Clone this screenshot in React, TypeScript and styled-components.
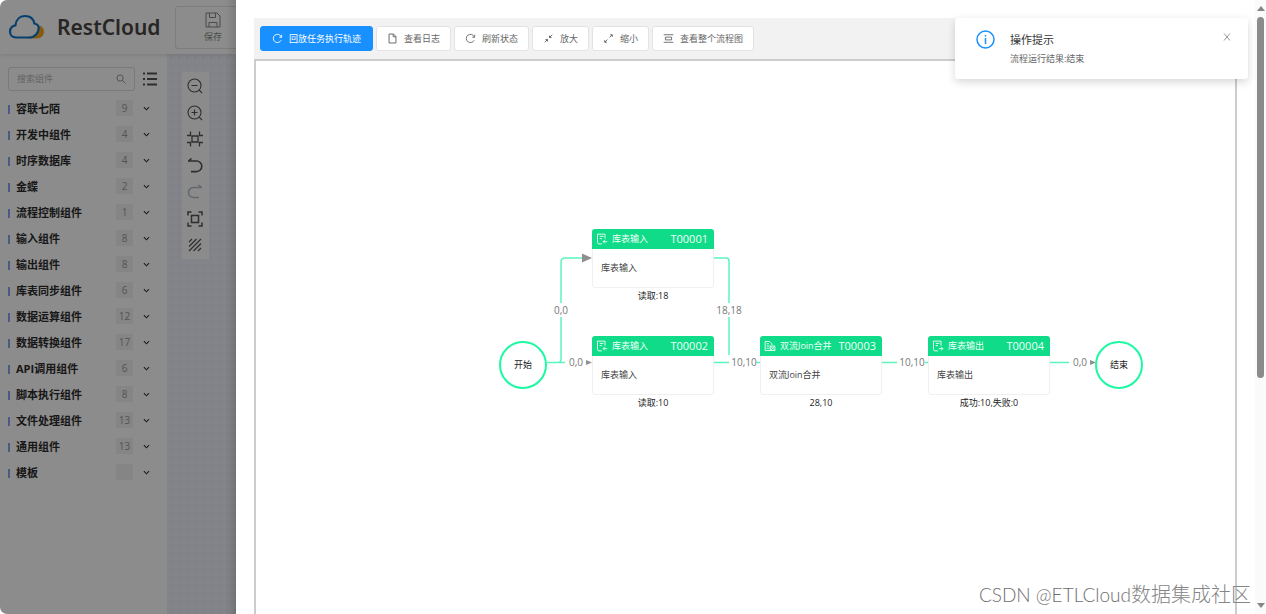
import React from 'react';
import styled, { createGlobalStyle, css } from 'styled-components';

const GlobalStyle = createGlobalStyle`
  *, *::before, *::after { box-sizing: border-box; }
  body {
    margin: 0;
    background: #fff;
    color: #444;
    font-family: 'Open Sans', 'Noto Sans CJK SC', sans-serif;
    font-size: 9px;
    line-height: 16px;
  }
  button, input { font-family: inherit; font-size: inherit; line-height: inherit; color: inherit; }
  ul { list-style: none; margin: 0; padding: 0; }
  p, h1, h2, h3 { margin: 0; }
`;

const Shell = styled.div`
  display: grid;
  grid-template-columns: 236px minmax(0, 1fr) 11px;
  height: 100vh;
  overflow: hidden;
`;

/* ---------- dimmed editor behind the drawer ---------- */

const Editor = styled.div`
  position: relative;
  display: flex;
  flex-direction: column;
  min-height: 0;
  overflow: hidden;
  border-radius: 7px 0 0 7px;
  background: #fff;
`;

const Mask = styled.div`
  position: absolute;
  inset: 0;
  background: linear-gradient(90deg, transparent 226px, rgba(0, 0, 0, 0.12)), rgba(0, 0, 0, 0.45);
`;

const Header = styled.header`
  display: flex;
  align-items: center;
  flex: none;
  height: 54px;
  padding-left: 8px;
  box-shadow: 0 1px 4px rgba(0, 0, 0, 0.12);
  z-index: 0;
  > * { flex: none; }
`;

const Brand = styled.h1`
  width: 106px;
  margin-left: 12px;
  font-family: 'Noto Sans', sans-serif;
  font-size: 21px;
  line-height: 28px;
  font-weight: 600;
  color: #4a4444;
`;

const SaveButton = styled.button`
  display: flex;
  flex-direction: column;
  align-items: center;
  gap: 1px;
  width: 76px;
  height: 43px;
  margin-left: 12px;
  padding: 5px 0 0;
  border: 1px solid #e4e4e4;
  border-radius: 3px;
  background: #fff;
  color: #888;
`;

const EditorBody = styled.div`
  display: flex;
  flex: 1;
  min-height: 0;
`;

const Sidebar = styled.nav`
  flex: none;
  width: 167px;
  padding: 13px 10px 0 8px;
`;

const SearchRow = styled.div`
  display: flex;
  align-items: center;
  gap: 7px;
  margin-bottom: 4px;
`;

const SearchBox = styled.label`
  display: flex;
  align-items: center;
  flex: none;
  width: 127px;
  height: 24px;
  padding: 0 8px;
  border: 1px solid #dcdcdc;
  border-radius: 3px;
  color: #888;
`;

const SearchInput = styled.input`
  flex: 1;
  min-width: 0;
  padding: 0;
  border: 0;
  outline: 0;
  background: transparent;
  &::placeholder { color: #b5b5b5; opacity: 1; }
`;

const IconButton = styled.button<{ $faded?: boolean }>`
  display: flex;
  align-items: center;
  justify-content: center;
  padding: 0;
  border: 0;
  background: transparent;
  color: ${(p) => (p.$faded ? '#b4bac6' : '#555')};
`;

const GroupButton = styled.button`
  display: flex;
  align-items: center;
  width: 100%;
  height: 26px;
  padding: 0;
  border: 0;
  background: transparent;
  text-align: left;
`;

const GroupName = styled.span`
  flex: 1;
  display: flex;
  align-items: center;
  gap: 6px;
  padding-top: 2px;
  font-size: 11px;
  font-weight: 700;
  color: #2c2c2c;
  &::before {
    content: '';
    width: 2px;
    height: 9px;
    background: #85a5f0;
  }
`;

const Count = styled.span`
  width: 17px;
  height: 16px;
  margin-right: 10px;
  background: #f2f2f2;
  color: #999;
  font-size: 10px;
  text-align: center;
`;

const Chevron = styled.span`
  display: flex;
  margin-right: 7px;
  color: #333;
`;

const Board = styled.div`
  flex: 1;
  padding: 18px 0 0 15px;
  background-color: #eff1f9;
  background-image: radial-gradient(circle, #e3e5ee 1px, transparent 1px);
  background-size: 8px 8px;
`;

const ToolStrip = styled.div`
  display: flex;
  flex-direction: column;
  justify-content: space-between;
  width: 27px;
  height: 187px;
  padding: 4px 1px 4px 0;
  background: #fdfdfd;
  ${IconButton} { height: 20px; }
`;

/* ---------- drawer ---------- */

const Drawer = styled.main`
  position: relative;
  display: flex;
  flex-direction: column;
  min-height: 0;
  padding: 18px 18px 0;
  background: #fff;
`;

const Toolbar = styled.div`
  display: flex;
  align-items: center;
  flex: none;
  gap: 3px;
  height: 41px;
  padding: 0 6px;
  background: #f2f2f2;
`;

const ToolButton = styled.button<{ $primary?: boolean }>`
  display: flex;
  align-items: center;
  gap: 6px;
  height: 25px;
  padding: 0 10px;
  border: 1px solid #e3e3e3;
  border-radius: 3px;
  background: #fff;
  color: #666;
  white-space: nowrap;
  ${(p) =>
    p.$primary &&
    css`
      padding: 0 11px;
      border-color: #1890ff;
      background: #1890ff;
      color: #fff;
    `}
`;

const Canvas = styled.section`
  position: relative;
  flex: 1;
  min-height: 0;
  overflow: hidden;
  border: 2px solid #ccc;
  border-bottom: 0;
`;

const Links = styled.svg`
  position: absolute;
  left: 0;
  top: 0;
`;

const NodeBox = styled.article<{ $x: number; $y: number }>`
  position: absolute;
  left: ${(p) => p.$x}px;
  top: ${(p) => p.$y}px;
  width: 122px;
`;

const NodeCard = styled.div`
  height: 59px;
  overflow: hidden;
  border-radius: 3px;
`;

const NodeHead = styled.header`
  display: flex;
  align-items: center;
  gap: 4px;
  height: 20px;
  padding: 0 6px 0 4px;
  background: #0fdb89;
  color: #f2fff9;
  white-space: nowrap;
`;

const NodeId = styled.span`
  margin-left: auto;
  font-size: 11px;
`;

const NodeBody = styled.p`
  height: 39px;
  padding: 11px 8px;
  border: 1px solid #f0f0f0;
  border-top: 0;
  border-radius: 0 0 3px 3px;
  background: #fff;
`;

const NodeStat = styled.p`
  text-align: center;
  color: #222;
`;

const Terminal = styled.div<{ $x: number; $y: number }>`
  position: absolute;
  left: ${(p) => p.$x}px;
  top: ${(p) => p.$y}px;
  display: flex;
  align-items: center;
  justify-content: center;
  width: 48px;
  height: 48px;
  border: 2px solid #1bf9a3;
  border-radius: 50%;
  background: #fff;
  color: #222;
`;

const LinkLabel = styled.span<{ $x: number; $y: number }>`
  position: absolute;
  left: ${(p) => p.$x}px;
  top: ${(p) => p.$y}px;
  transform: translate(-50%, -50%);
  font-size: 10px;
  line-height: 14px;
  color: #777;
  background: #fff;
`;

/* ---------- overlays ---------- */

const Toast = styled.div`
  position: absolute;
  top: 18px;
  right: 7px;
  display: flex;
  width: 293px;
  height: 61px;
  padding: 12px 16px 0 21px;
  border-radius: 3px;
  background: #fff;
  box-shadow: 0 3px 9px rgba(0, 0, 0, 0.16);
`;

const ToastText = styled.div`
  flex: 1;
  padding: 2px 0 0 15px;
  color: #666;
`;

const ToastTitle = styled.h2`
  margin-bottom: 3px;
  font-size: 11px;
  line-height: 16px;
  font-weight: 400;
  color: #333;
`;

const CloseButton = styled(IconButton)`
  align-self: flex-start;
  width: 10px;
  height: 14px;
  color: #999;
`;

const Watermark = styled.p`
  position: absolute;
  right: 4px;
  bottom: 4px;
  font-family: Lato, 'Noto Sans CJK SC', sans-serif;
  font-size: 20px;
  line-height: 30px;
  font-weight: 300;
  color: #858585;
  white-space: nowrap;
`;

const WatermarkHandle = styled.span`
  font-size: 19px;
  color: #6e6e6e;
`;

const ScrollTrack = styled.div`
  display: flex;
  flex-direction: column;
  align-items: center;
  padding: 6px 0;
  background: #fafafa;
  color: #858585;
`;

const ScrollThumb = styled.div`
  flex: 0 0 60%;
  width: 7px;
  margin: 6px 0 auto;
  border-radius: 4px;
  background: #8b8b8b;
`;

/* ---------- icons ---------- */

const Icon = ({ size = 16, w = 1, children }: { size?: number; w?: number; children: React.ReactNode }) => (
  <svg width={size} height={size} viewBox="0 0 16 16" fill="none" stroke="currentColor" strokeWidth={w} aria-hidden="true">
    {children}
  </svg>
);

const Logo = () => (
  <svg width="37" height="26" viewBox="0 0 37 26" fill="none" aria-hidden="true">
    <path d="M19 24.500h10c4 0 7-3 7-6.500 0-3.500-2-6-5-6.500-1 6.500-5 11-12 13z" fill="#f5a81c" />
    <path
      d="M8 23.500c-3.800 0-6-2.700-6-6s2.400-6 5.400-6.200C8 6 11.500 2 17 2c5 0 8.500 3 9.400 7.500 2.600.5 4.300 2.300 4.300 4.800 0 4-3.700 9.200-9.700 9.200z"
      fill="#fff"
      stroke="#0d76c8"
      strokeWidth="2.200"
    />
  </svg>
);

const ReloadIcon = () => (
  <Icon size={11} w={1.3}>
    <path d="M13.300 10.500A6 6 0 1 1 13.500 5.800M14 2.500v3.800h-3.300" />
  </Icon>
);
const FileIcon = () => (
  <Icon size={11} w={1.4}>
    <path d="M3 1.500h6.500L13 5v9.500H3zM9 1.500v4h4" />
  </Icon>
);
const ShrinkIcon = () => (
  <Icon size={11} w={1.3}>
    <path d="M2.500 13.500l4-4M13.500 2.500l-4 4" />
    <path d="M4 9.500h2.500V12zM12 6.500H9.500V4z" fill="currentColor" />
  </Icon>
);
const ExpandIcon = () => (
  <Icon size={11} w={1.3}>
    <path d="M3 13l3.500-3.500M13 3L9.500 6.500" />
    <path d="M2.500 11v2.500H5zM13.500 5V2.500H11z" fill="currentColor" />
  </Icon>
);
const FlowIcon = () => (
  <Icon size={11} w={1.3}>
    <path d="M1 2.500h14M1 13.500h14M3.500 6h9v4h-9z" />
  </Icon>
);

const ZoomIcon = ({ plus }: { plus?: boolean }) => (
  <Icon w={1.1}>
    <circle cx="7.500" cy="7.500" r="6.500" />
    <path d="M4.500 7.500h6M12.200 12.200l2.800 2.800" />
    {plus && <path d="M7.500 4.500v6" />}
  </Icon>
);

const stripTools = [
  { label: '缩小画布', icon: <ZoomIcon /> },
  { label: '放大画布', icon: <ZoomIcon plus /> },
  {
    label: '适应内容',
    icon: (
      <Icon w={1.3}>
        <path d="M5 5h6v6H5zM0 4.500h3.500V.5M12.500.5v4H16M0 11.500h3.500v4M12.500 15.500v-4H16" />
      </Icon>
    ),
  },
  {
    label: '撤销',
    icon: (
      <Icon w={1.6}>
        <path d="M1 3h8.500a5.300 5.300 0 0 1 0 10.600H4M4.500 .5L1.500 3" />
      </Icon>
    ),
  },
  {
    label: '重做',
    faded: true,
    icon: (
      <Icon w={1.5}>
        <path d="M15 3.500H6.500a5 5 0 0 0 0 10H12M11.500 1l3 2.500" />
      </Icon>
    ),
  },
  {
    label: '全屏',
    icon: (
      <Icon w={1.5}>
        <path d="M4.500 4.500h7v7h-7zM1 4.500V1h3.500M11.500 1H15v3.500M15 11.500V15h-3.500M4.500 15H1v-3.500" />
      </Icon>
    ),
  },
  {
    label: '网格',
    icon: (
      <Icon w={1.2}>
        <path d="M2 5l3-3M2 9.500L9.500 2M2 14L14 2M6.500 14L14 6.500M11 14l3-3" />
      </Icon>
    ),
  },
];

const NodeIcon = ({ kind }: { kind: string }) => (
  <Icon size={12} w={1.2}>
    {kind === 'join' ? (
      <>
        <path d="M1.500 14V2h6l3 3v2M3.500 5h3M3.500 8h4M3.500 11h4M1.500 14H8" />
        <path d="M8.500 8h6v6h-6zM8.500 8l6 6M14.500 8l-6 6" />
      </>
    ) : (
      <>
        <path d="M8 14.500H4A2 2 0 0 1 2 12.500V1.500h10v6M5 4.500h5M5 7.500h3" />
        {kind === 'in' ? <path d="M15 11.500H9.500M12 9l-2.500 2.500L12 14" /> : <path d="M9 11.500h5.500M12 9l2.500 2.500L12 14" />}
      </>
    )}
  </Icon>
);

/* ---------- data ---------- */

const groups: [string, string][] = [
  ['容联七陌', '9'],
  ['开发中组件', '4'],
  ['时序数据库', '4'],
  ['金蝶', '2'],
  ['流程控制组件', '1'],
  ['输入组件', '8'],
  ['输出组件', '8'],
  ['库表同步组件', '6'],
  ['数据运算组件', '12'],
  ['数据转换组件', '17'],
  ['API调用组件', '6'],
  ['脚本执行组件', '8'],
  ['文件处理组件', '13'],
  ['通用组件', '13'],
  ['模板', ''],
];

const toolbar = [
  { label: '回放任务执行轨迹', icon: <ReloadIcon />, primary: true },
  { label: '查看日志', icon: <FileIcon /> },
  { label: '刷新状态', icon: <ReloadIcon /> },
  { label: '放大', icon: <ShrinkIcon /> },
  { label: '缩小', icon: <ExpandIcon /> },
  { label: '查看整个流程图', icon: <FlowIcon /> },
];

const nodes = [
  { id: 'T00001', name: '库表输入', stat: '读取:18', kind: 'in', x: 336, y: 168 },
  { id: 'T00002', name: '库表输入', stat: '读取:10', kind: 'in', x: 336, y: 275 },
  { id: 'T00003', name: '双流Join合并', stat: '28,10', kind: 'join', x: 504, y: 275 },
  { id: 'T00004', name: '库表输出', stat: '成功:10,失败:0', kind: 'out', x: 672, y: 275 },
];

const linkLabels = [
  { text: '0,0', x: 305, y: 249 },
  { text: '18,18', x: 473, y: 249 },
  { text: '0,0', x: 320, y: 301 },
  { text: '10,10', x: 488, y: 301 },
  { text: '10,10', x: 656, y: 301 },
  { text: '0,0', x: 824, y: 301 },
];

export default function App() {
  return (
    <>
      <GlobalStyle />
      <Shell>
        <Editor>
          <Header>
            <Logo />
            <Brand>RestCloud</Brand>
            <SaveButton type="button">
              <Icon>
                <path d="M1 1h11l3 3v11H1zM4.500 1v4.500h6V1M4 15v-4.500h8V15" />
              </Icon>
              保存
            </SaveButton>
          </Header>
          <EditorBody>
            <Sidebar>
              <SearchRow>
                <SearchBox>
                  <SearchInput type="text" placeholder="搜索组件" aria-label="搜索组件" />
                  <Icon size={10} w={1.4}>
                    <circle cx="6.500" cy="6.500" r="5" />
                    <path d="M10 10l5 5" />
                  </Icon>
                </SearchBox>
                <IconButton type="button" aria-label="列表">
                  <Icon w={2}>
                    <path d="M1 2.500h2M1 8h2M1 13.500h2M5 2.500h10M5 8h10M5 13.500h10" />
                  </Icon>
                </IconButton>
              </SearchRow>
              <ul>
                {groups.map(([name, count]) => (
                  <li key={name}>
                    <GroupButton type="button">
                      <GroupName>{name}</GroupName>
                      <Count>{count}</Count>
                      <Chevron>
                        <Icon size={7} w={2.4}>
                          <path d="M2 5l6 6 6-6" />
                        </Icon>
                      </Chevron>
                    </GroupButton>
                  </li>
                ))}
              </ul>
            </Sidebar>
            <Board>
              <ToolStrip>
                {stripTools.map((t) => (
                  <IconButton key={t.label} type="button" aria-label={t.label} $faded={t.faded}>
                    {t.icon}
                  </IconButton>
                ))}
              </ToolStrip>
            </Board>
          </EditorBody>
          <Mask />
        </Editor>

        <Drawer>
          <Toolbar>
            {toolbar.map((b) => (
              <ToolButton key={b.label} type="button" $primary={b.primary}>
                {b.icon}
                {b.label}
              </ToolButton>
            ))}
          </Toolbar>
          <Canvas>
            <Links width="900" height="400" fill="none" stroke="#5cf5bd" strokeWidth="1.500" aria-hidden="true">
              <path d="M291 301.500h18M302 301.500q3 0 3-3V201q0-4 4-4h18" />
              <path d="M458 197h12q3 0 3 3v94M458 301.500h15M498 301.500h6M626 301.500h15M669 301.500h3M794 301.500h19" />
              <path d="M326 192.500l10 4.500-10 4.500zM330 299l6 2.500-6 2.500zM834 299l6 2.500-6 2.500z" fill="#8f8f8f" stroke="none" />
            </Links>
            {linkLabels.map((l) => (
              <LinkLabel key={`${l.x}-${l.y}`} $x={l.x} $y={l.y}>
                {l.text}
              </LinkLabel>
            ))}
            <Terminal $x={243} $y={280}>开始</Terminal>
            {nodes.map((n) => (
              <NodeBox key={n.id} $x={n.x} $y={n.y}>
                <NodeCard>
                  <NodeHead>
                    <NodeIcon kind={n.kind} />
                    {n.name}
                    <NodeId>{n.id}</NodeId>
                  </NodeHead>
                  <NodeBody>{n.name}</NodeBody>
                </NodeCard>
                <NodeStat>{n.stat}</NodeStat>
              </NodeBox>
            ))}
            <Terminal $x={839} $y={280}>结束</Terminal>
          </Canvas>

          <Toast role="status">
            <svg width="19" height="19" viewBox="0 0 19 19" fill="none" stroke="#1890ff" strokeWidth="1.500" aria-hidden="true">
              <circle cx="9.500" cy="9.500" r="8.500" />
              <path d="M9.500 8v6M9.500 5v1.500" />
            </svg>
            <ToastText>
              <ToastTitle>操作提示</ToastTitle>
              <p>流程运行结果:结束</p>
            </ToastText>
            <CloseButton type="button" aria-label="关闭">
              <Icon size={8} w={2}>
                <path d="M2 1l12 14M14 1L2 15" />
              </Icon>
            </CloseButton>
          </Toast>
          <Watermark>
            <WatermarkHandle>CSDN @ETLCloud</WatermarkHandle>数据集成社区
          </Watermark>
        </Drawer>

        <ScrollTrack aria-hidden="true">
          <svg width="8" height="5" viewBox="0 0 8 5" fill="currentColor">
            <path d="M4 0l4 5H0z" />
          </svg>
          <ScrollThumb />
          <svg width="8" height="5" viewBox="0 0 8 5" fill="currentColor">
            <path d="M4 5l4-5H0z" />
          </svg>
        </ScrollTrack>
      </Shell>
    </>
  );
}
